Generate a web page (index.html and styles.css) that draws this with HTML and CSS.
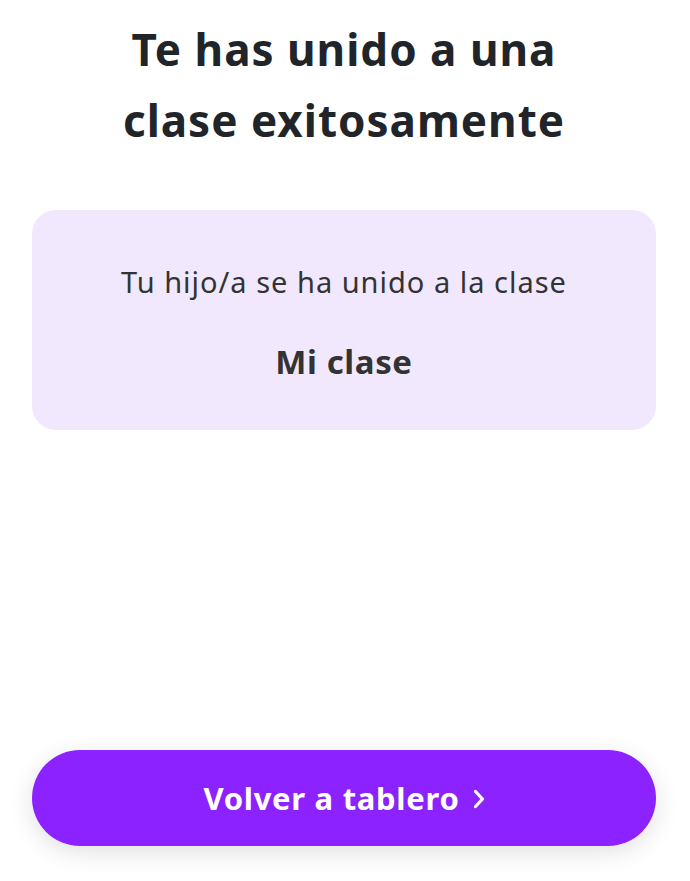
FILE: index.html
```html
<!DOCTYPE html>
<html lang="es">
<head>
<meta charset="utf-8">
<link rel="stylesheet" href="styles.css">
</head>
<body>
<main class="page">
  <h1 class="title">Te has unido a una clase exitosamente</h1>
  <section class="card">
    <p class="card-text">Tu hijo/a se ha unido a la clase</p>
    <p class="card-name">Mi clase</p>
  </section>
  <button class="btn" type="button">
    <span>Volver a tablero</span>
    <svg class="chev" viewBox="0 0 12 20" width="12" height="20" aria-hidden="true"><path d="M2.5 2.5 L9.5 10 L2.5 17.5" fill="none" stroke="#fff" stroke-width="3.2" stroke-linecap="round" stroke-linejoin="round"/></svg>
  </button>
</main>
</body>
</html>
```
FILE: styles.css
```css
html, body { margin: 0; padding: 0; background: #fff; }
body { font-family: "Noto Sans", Lato, "Liberation Sans", sans-serif; }
.page {
  box-sizing: border-box;
  min-height: 100vh;
  padding: 14px 34px 35px 32px;
  display: flex;
  flex-direction: column;
}
.title {
  margin: 0 auto;
  max-width: 470px;
  text-align: center;
  font-size: 44px;
  line-height: 71px;
  font-weight: 700;
  letter-spacing: 1px;
  color: #212529;
}
.card {
  margin-top: 54px;
  background: #f2e8fd;
  border-radius: 24px;
  padding: 50px 20px 46px;
  text-align: center;
}
.card-text {
  margin: 0;
  font-size: 29px;
  line-height: 44px;
  letter-spacing: 1px;
  color: #333;
}
.card-name {
  margin: 36px 0 0;
  font-size: 33px;
  line-height: 44px;
  font-weight: 700;
  letter-spacing: 0.6px;
  color: #333;
}
.btn {
  margin-top: auto;
  height: 96px;
  border: none;
  border-radius: 48px;
  background: #8c22ff;
  color: #fff;
  font-family: inherit;
  font-size: 31px;
  font-weight: 700;
  letter-spacing: 0.7px;
  display: flex;
  align-items: center;
  justify-content: center;
  gap: 13px;
  box-shadow: 0 6px 24px rgba(0,0,0,0.12);
}
.chev { margin-top: 2px; }
```
